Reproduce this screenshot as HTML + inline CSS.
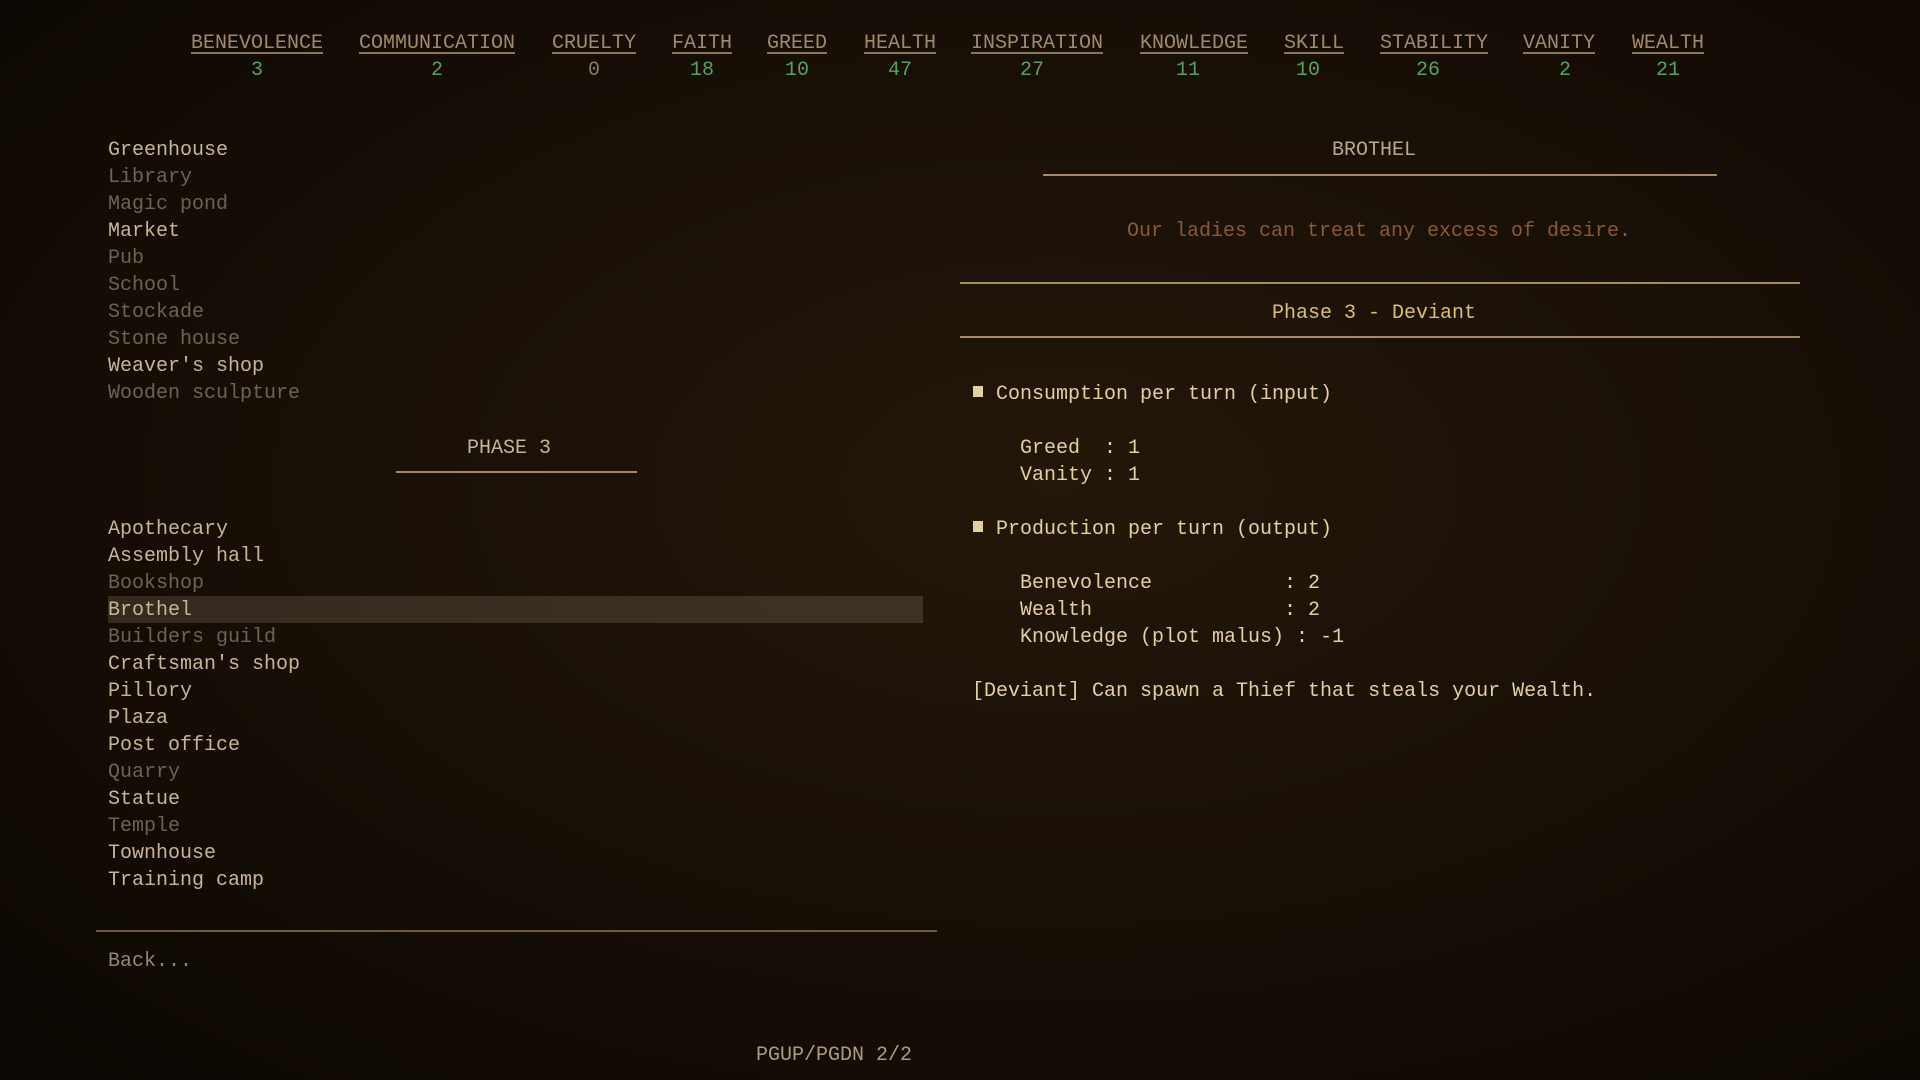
<!DOCTYPE html>
<html><head><meta charset="utf-8"><style>
html,body{margin:0;padding:0;width:1920px;height:1080px;overflow:hidden}
body{background:radial-gradient(ellipse at 55% 45%,#231709 0%,#180f06 50%,#0c0703 100%);font-family:"Liberation Mono",monospace;font-size:20px;color:#c8b898;position:relative}
.t{position:absolute;line-height:26px;white-space:pre;margin-top:3px}
.c{transform:translateX(-50%)}
.h{color:#a08a6a;text-decoration:underline;text-underline-offset:4px;text-decoration-color:#8a7658}
.n{color:#5aa05a}
.d{color:#6e6252}
.b{color:#c6b696}
.y{color:#e2d0a0}
.ln{position:absolute;height:2px;background:#c8a878;opacity:.8}
.sq{position:absolute;width:10px;height:11px;background:#e2d0a0}
</style></head><body>
<div class="t c h" style="left:257px;top:28px">BENEVOLENCE</div><div class="t c n" style="left:257px;top:55px">3</div>
<div class="t c h" style="left:437px;top:28px">COMMUNICATION</div><div class="t c n" style="left:437px;top:55px">2</div>
<div class="t c h" style="left:594px;top:28px">CRUELTY</div><div class="t c" style="left:594px;top:55px;color:#8a7a62">0</div>
<div class="t c h" style="left:702px;top:28px">FAITH</div><div class="t c n" style="left:702px;top:55px">18</div>
<div class="t c h" style="left:797px;top:28px">GREED</div><div class="t c n" style="left:797px;top:55px">10</div>
<div class="t c h" style="left:900px;top:28px">HEALTH</div><div class="t c n" style="left:900px;top:55px">47</div>
<div class="t c h" style="left:1037px;top:28px">INSPIRATION</div><div class="t c n" style="left:1032px;top:55px">27</div>
<div class="t c h" style="left:1194px;top:28px">KNOWLEDGE</div><div class="t c n" style="left:1188px;top:55px">11</div>
<div class="t c h" style="left:1314px;top:28px">SKILL</div><div class="t c n" style="left:1308px;top:55px">10</div>
<div class="t c h" style="left:1434px;top:28px">STABILITY</div><div class="t c n" style="left:1428px;top:55px">26</div>
<div class="t c h" style="left:1559px;top:28px">VANITY</div><div class="t c n" style="left:1565px;top:55px">2</div>
<div class="t c h" style="left:1668px;top:28px">WEALTH</div><div class="t c n" style="left:1668px;top:55px">21</div>

<div class="t b" style="left:108px;top:135px">Greenhouse</div>
<div class="t d" style="left:108px;top:162px">Library</div>
<div class="t d" style="left:108px;top:189px">Magic pond</div>
<div class="t b" style="left:108px;top:216px">Market</div>
<div class="t d" style="left:108px;top:243px">Pub</div>
<div class="t d" style="left:108px;top:270px">School</div>
<div class="t d" style="left:108px;top:297px">Stockade</div>
<div class="t d" style="left:108px;top:324px">Stone house</div>
<div class="t b" style="left:108px;top:351px">Weaver's shop</div>
<div class="t d" style="left:108px;top:378px">Wooden sculpture</div>

<div class="t c b" style="left:509px;top:433px">PHASE 3</div>
<div class="ln" style="left:396px;width:241px;top:471px"></div>

<div style="position:absolute;left:108px;top:596px;width:815px;height:27px;background:linear-gradient(90deg,rgba(110,96,78,.35),rgba(100,86,68,.45))"></div>
<div class="t b" style="left:108px;top:514px">Apothecary</div>
<div class="t b" style="left:108px;top:541px">Assembly hall</div>
<div class="t d" style="left:108px;top:568px">Bookshop</div>
<div class="t b" style="left:108px;top:595px">Brothel</div>
<div class="t d" style="left:108px;top:622px">Builders guild</div>
<div class="t b" style="left:108px;top:649px">Craftsman's shop</div>
<div class="t b" style="left:108px;top:676px">Pillory</div>
<div class="t b" style="left:108px;top:703px">Plaza</div>
<div class="t b" style="left:108px;top:730px">Post office</div>
<div class="t d" style="left:108px;top:757px">Quarry</div>
<div class="t b" style="left:108px;top:784px">Statue</div>
<div class="t d" style="left:108px;top:811px">Temple</div>
<div class="t b" style="left:108px;top:838px">Townhouse</div>
<div class="t b" style="left:108px;top:865px">Training camp</div>

<div class="ln" style="left:96px;width:841px;top:930px;opacity:.5"></div>
<div class="t" style="left:108px;top:946px;color:#938772">Back...</div>
<div class="t c" style="left:834px;top:1040px;color:#aa9c82">PGUP/PGDN 2/2</div>

<div class="t c" style="left:1374px;top:135px;color:#b8aa8c">BROTHEL</div>
<div class="ln" style="left:1043px;width:674px;top:174px"></div>
<div class="t c" style="left:1379px;top:216px;color:#8a5a30">Our ladies can treat any excess of desire.</div>
<div class="ln" style="left:960px;width:840px;top:282px"></div>
<div class="t c" style="left:1374px;top:298px;color:#d8c070">Phase 3 - Deviant</div>
<div class="ln" style="left:960px;width:840px;top:336px"></div>

<div class="sq" style="left:973px;top:386px"></div>
<div class="t y" style="left:996px;top:379px">Consumption per turn (input)</div>
<div class="t y" style="left:1020px;top:433px">Greed  : 1</div>
<div class="t y" style="left:1020px;top:460px">Vanity : 1</div>
<div class="sq" style="left:973px;top:521px"></div>
<div class="t y" style="left:996px;top:514px">Production per turn (output)</div>
<div class="t y" style="left:1020px;top:568px">Benevolence           : 2</div>
<div class="t y" style="left:1020px;top:595px">Wealth                : 2</div>
<div class="t y" style="left:1020px;top:622px">Knowledge (plot malus) : -1</div>
<div class="t y" style="left:972px;top:676px">[Deviant] Can spawn a Thief that steals your Wealth.</div>
</body></html>
